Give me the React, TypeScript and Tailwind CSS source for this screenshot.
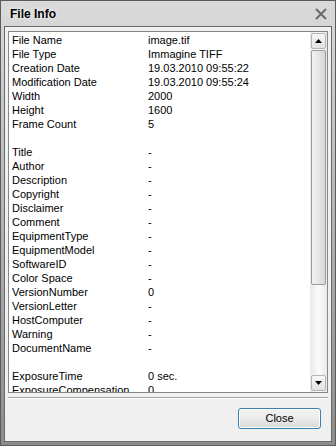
import React from 'react'

const font = { fontFamily: '"Liberation Sans", Arial, sans-serif' }

const rows: [string, string][] = [
  ['File Name', 'image.tif'],
  ['File Type', 'Immagine TIFF'],
  ['Creation Date', '19.03.2010 09:55:22'],
  ['Modification Date', '19.03.2010 09:55:24'],
  ['Width', '2000'],
  ['Height', '1600'],
  ['Frame Count', '5'],
  ['', ''],
  ['Title', '-'],
  ['Author', '-'],
  ['Description', '-'],
  ['Copyright', '-'],
  ['Disclaimer', '-'],
  ['Comment', '-'],
  ['EquipmentType', '-'],
  ['EquipmentModel', '-'],
  ['SoftwareID', '-'],
  ['Color Space', '-'],
  ['VersionNumber', '0'],
  ['VersionLetter', '-'],
  ['HostComputer', '-'],
  ['Warning', '-'],
  ['DocumentName', '-'],
  ['', ''],
  ['ExposureTime', '0 sec.'],
  ['ExposureCompensation', '0'],
]

function ScrollButton({ down }: { down?: boolean }) {
  return (
    <div className="h-[16px] flex items-center justify-center border border-[#b5b5b5] rounded-[2px] bg-gradient-to-b from-[#f7f7f7] to-[#e2e2e2]">
      <svg width="7" height="4" viewBox="0 0 7 4">
        {down ? <path d="M0 0h7L3.5 4z" fill="#000" /> : <path d="M3.5 0L7 4H0z" fill="#000" />}
      </svg>
    </div>
  )
}

export default function App() {
  return (
    <div
      className="w-[336px] h-[446px] flex flex-col border border-[#5c5c5c] px-[3px] pb-[3px] bg-gradient-to-b from-[#dadada] via-[#b3b3b3] to-[#8c8c8c]"
      style={font}
    >
      {/* Title bar */}
      <div className="h-[25px] flex items-center justify-between pl-[6px] pr-[4px]">
        <span className="text-[12px] font-bold text-black [text-shadow:0_0_5px_#ffffff]">File Info</span>
        <svg width="14" height="14" viewBox="0 0 14 14" className="mt-[1px]">
          <path d="M2 2L12 12M12 2L2 12" stroke="#6b6b6b" strokeWidth="2" />
        </svg>
      </div>

      {/* Body */}
      <div className="flex-1 flex flex-col border border-[#6a6a6a] bg-[#f0f0f0]">
        <div className="mt-[4px] ml-[3px] mr-[3px] h-[362px] flex border border-[#828790] bg-white overflow-hidden">
          <div className="flex-1 pt-[1px] pl-[3px] overflow-hidden">
            {rows.map(([k, v], i) => (
              <div key={i} className="h-[14px] flex items-center text-[11px] leading-[14px] text-black whitespace-nowrap">
                <span className="w-[136px] shrink-0">{k}</span>
                <span>{v}</span>
              </div>
            ))}
          </div>
          <div className="w-[17px] flex flex-col p-[1px] bg-gradient-to-r from-[#e8e8e8] via-[#fbfbfb] to-[#e8e8e8]">
            <ScrollButton />
            <div className="mt-[1px] h-[235px] border border-[#9c9c9c] rounded-[2px] bg-gradient-to-r from-[#f2f2f2] via-[#e6e6e6] to-[#d6d6d6]" />
            <div className="flex-1" />
            <ScrollButton down />
          </div>
        </div>

        <div className="mt-[4px] mx-[3px] h-[2px] border-t border-[#a0a0a0] border-b border-b-white" />

        <div className="flex justify-end mt-[9px] mr-[10px]">
          <button className="w-[83px] h-[21px] rounded-[3px] border border-[#3c7fb1] bg-gradient-to-b from-[#f2f2f2] via-[#ebebeb] to-[#d8d8d8] text-[11px] text-black shadow-[inset_0_0_0_1px_#ffffff]">
            Close
          </button>
        </div>
      </div>
    </div>
  )
}
